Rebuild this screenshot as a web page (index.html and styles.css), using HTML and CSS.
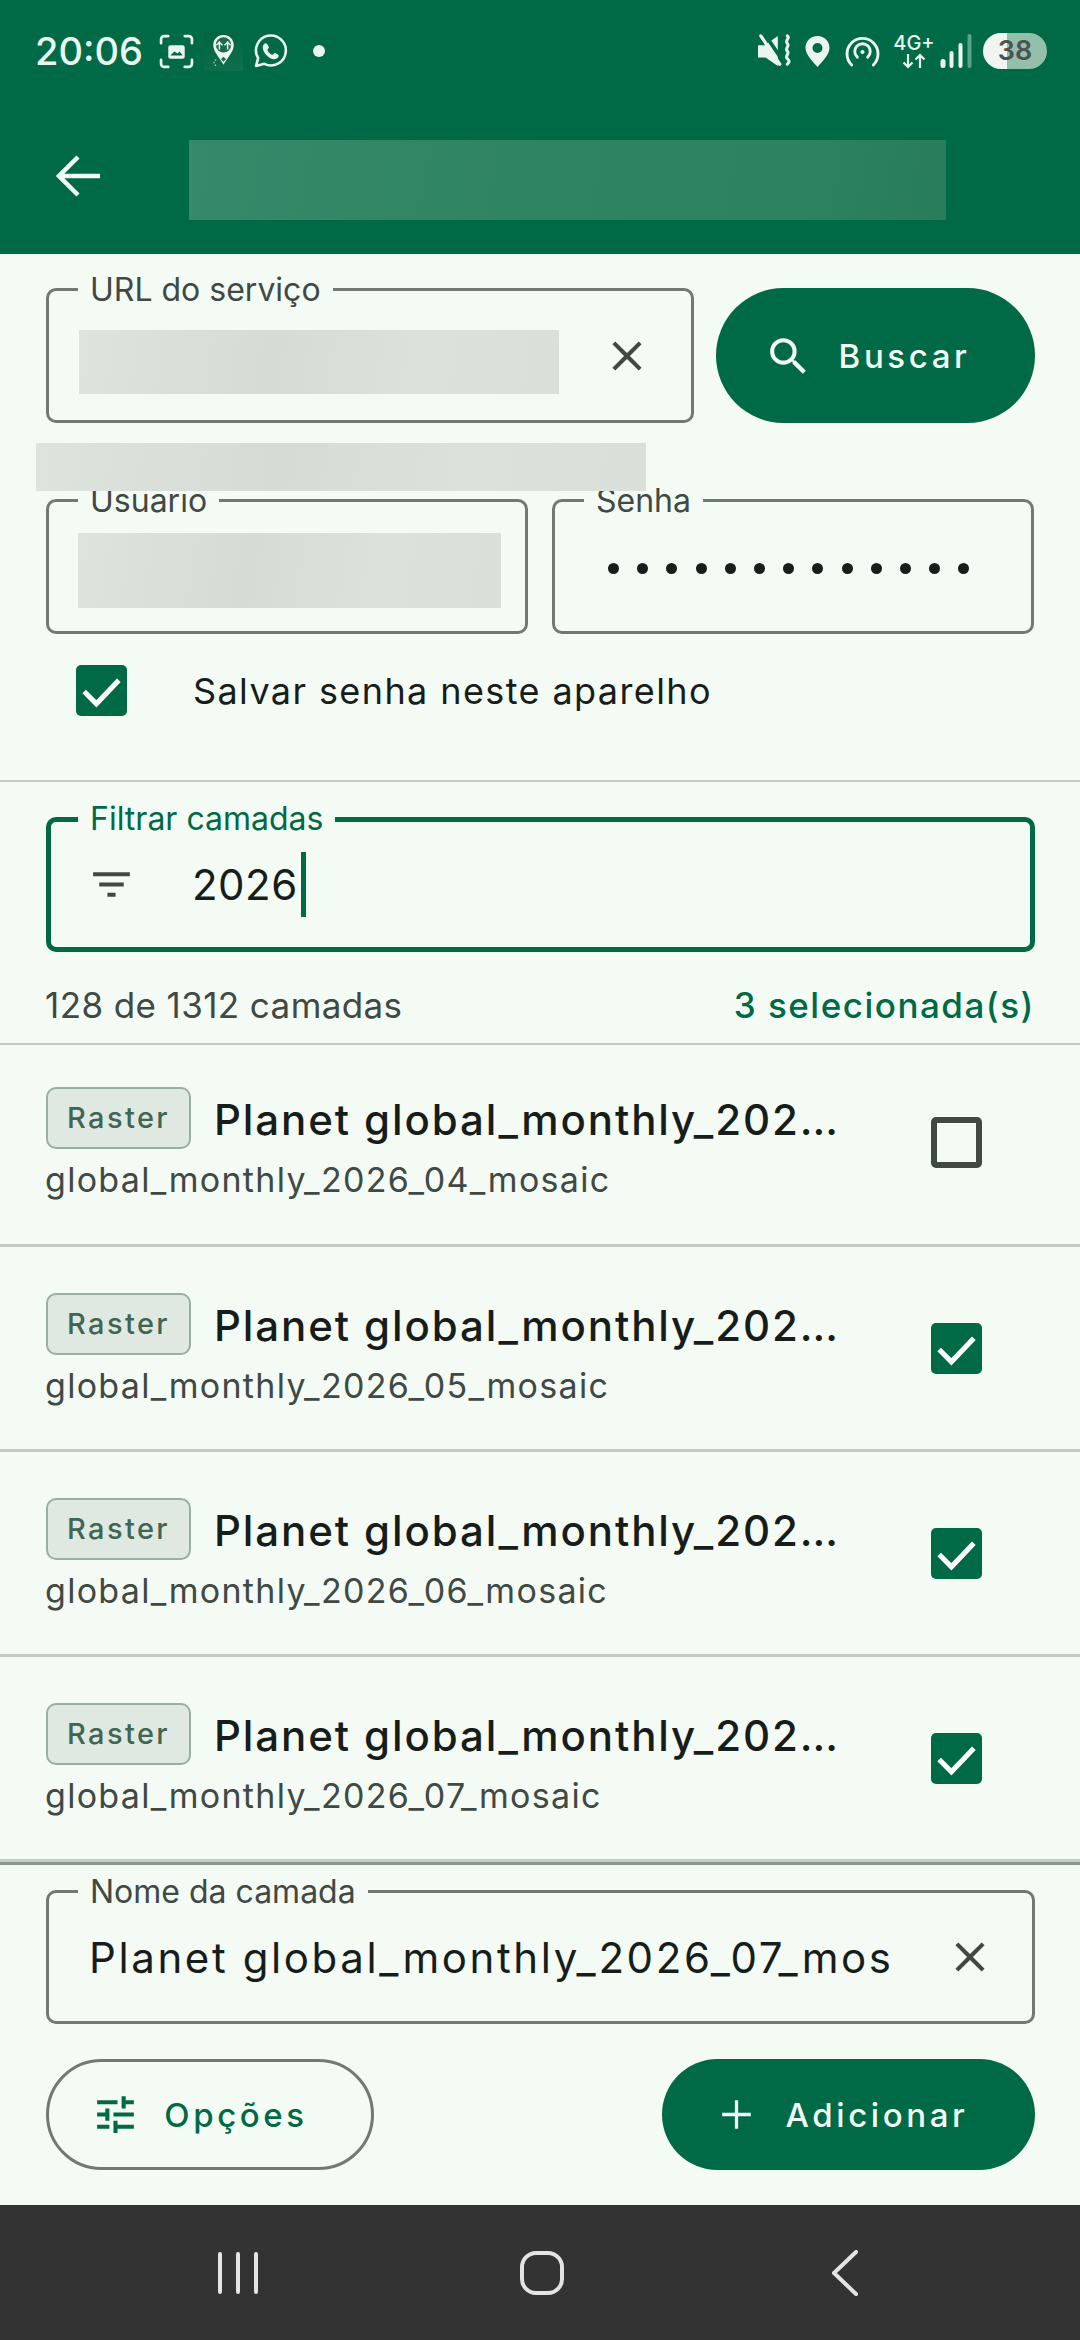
FILE: index.html
```html
<!DOCTYPE html>
<html lang="pt-BR">
<head>
    <meta charset="UTF-8">
    <meta name="viewport" content="width=device-width, initial-scale=1.0">
    <title>Adicionar camadas</title>
    <link rel="stylesheet" href="styles.css">
</head>
<body>

<svg class="defs" width="0" height="0">
    <symbol id="i-close" viewBox="0 0 24 24"><path d="M19 6.41L17.59 5 12 10.59 6.41 5 5 6.41 10.59 12 5 17.59 6.41 19 12 13.41 17.59 19 19 17.59 13.41 12z"/></symbol>
    <symbol id="i-check" viewBox="0 0 50 50"><path d="M8 26l12 12 22-23" fill="none" stroke="#fff" stroke-width="5"/></symbol>
</svg>

<div class="page">
    <header class="top">
        <div class="status">
            <div class="status-left">
                <span class="clock">20:06</span>
                <svg class="ic-shot" viewBox="0 0 34 34" fill="none" stroke="currentColor" stroke-width="2.6" stroke-linecap="round">
                    <path d="M2 9V5a3 3 0 0 1 3-3h4M25 2h4a3 3 0 0 1 3 3v4M32 25v4a3 3 0 0 1-3 3h-4M9 32H5a3 3 0 0 1-3-3v-4"/>
                    <rect x="9" y="11" width="16" height="13" rx="2" fill="currentColor" stroke="none"/>
                    <path d="M11 21l4-4 3 2 2-2 3 4z" fill="#00694a" stroke="none"/>
                </svg>
                <svg class="ic-app" viewBox="0 0 38 38">
                    <path d="M19 3c-6 0-10 4.500-10 10 0 6 6 12 10 19 4-7 10-13 10-19 0-5.500-4-10-10-10z" fill="#eef7f2"/>
                    <circle cx="19" cy="12.500" r="7.500" fill="#1d6a4e"/>
                    <path d="M15 9v8M23 9v8M12 13l3-3 3 3M20 13l3-3 3 3" stroke="#eef7f2" stroke-width="1.400" fill="none"/>
                    <path d="M19 24l2.500 2.500-2.500 2.500-2.500-2.500z" fill="#1d6a4e"/>
                    <path d="M12 27c-3 1-3 4 0 6" stroke="#cfe5da" stroke-width="1" stroke-dasharray="1.500 1.500" fill="none"/>
                </svg>
                <svg class="ic-wa" viewBox="0 0 34 34">
                    <path d="M3 31l2-7.500A14.500 14.500 0 1 1 11 29z" fill="none" stroke="currentColor" stroke-width="2.500" stroke-linejoin="round"/>
                    <path d="M12.500 9c-1.500 0-3 2-3 4 0 5 6 11.500 11.500 11.500 2 0 4-1.500 4-3.500 0-1-3.500-2.500-4-2.500s-1.200 1.700-2 1.700c-1.500 0-5-3.500-5-5 0-.8 1.500-1.500 1.500-2.200S13.500 9 12.500 9z" fill="currentColor"/>
                </svg>
                <span class="status-dot"></span>
            </div>
            <div class="status-right">
                <svg class="ic-mute" viewBox="0 0 36 36">
                    <path d="M0 12h7L21 2v32L8 25H0z" fill="currentColor"/>
                    <path d="M7 0l21 31" stroke="#006a46" stroke-width="4"/>
                    <path d="M3 2l20 30" stroke="currentColor" stroke-width="3.500" stroke-linecap="round"/>
                    <path d="M31 2c3.500 2-3 5 0 8s-3 5 0 8-3 5 0 8 2 4 0 6" fill="none" stroke="currentColor" stroke-width="3.200" stroke-linecap="round"/>
                </svg>
                <svg class="ic-pin" viewBox="0 0 24 31">
                    <path fill-rule="evenodd" d="M12 0C5 0 0 5 0 12c0 7 8 14 12 19 4-5 12-12 12-19C24 5 19 0 12 0zm0 7a5 5 0 1 1 0 10 5 5 0 0 1 0-10z" fill="currentColor"/>
                </svg>
                <svg class="ic-hotspot" viewBox="0 0 33 31" fill="none" stroke="currentColor" stroke-width="2.800" stroke-linecap="round">
                    <path d="M6 29A15 15 0 1 1 27 29"/>
                    <path d="M11.500 21.500a7.500 7.500 0 1 1 10 0"/>
                    <circle cx="16.500" cy="16.500" r="2" fill="currentColor" stroke="none"/>
                </svg>
                <div class="net">
                    <span class="net-label">4G+</span>
                    <svg class="ic-arrows" viewBox="0 0 24 16" fill="none" stroke="currentColor" stroke-width="2.200">
                        <path d="M6 1v13M1.500 9.500L6 14l4.500-4.500M18 15V2M13.500 6.500L18 2l4.500 4.500"/>
                    </svg>
                </div>
                <svg class="ic-signal" viewBox="0 0 31 34" fill="currentColor">
                    <rect x="0" y="25" width="5" height="9" rx="2.500"/>
                    <rect x="9" y="17" width="4" height="17" rx="2"/>
                    <rect x="18" y="9" width="4" height="25" rx="2"/>
                    <rect x="27" y="0" width="4" height="34" rx="2" opacity=".4"/>
                </svg>
                <div class="battery">38</div>
            </div>
        </div>
        <div class="appbar">
            <svg class="ic-back" viewBox="0 0 44 44" fill="none" stroke="#f2fbf6" stroke-width="4.500">
                <path d="M44 22H4M22 3L3 22l19 19"/>
            </svg>
            <div class="blur blur-title"></div>
        </div>
    </header>

    <section class="form">
        <div class="form-row">
            <div class="field field-url">
                <span class="field-label">URL do serviço</span>
                <div class="blur blur-url"></div>
                <svg class="ic-clear"><use href="#i-close"/></svg>
            </div>
            <button class="btn btn-filled btn-search">
                <svg class="btn-icon" viewBox="0 0 24 24"><path d="M15.500 14h-.79l-.28-.27A6.471 6.471 0 0 0 16 9.500 6.500 6.500 0 1 0 9.500 16c1.610 0 3.090-.59 4.230-1.570l.27.28v.79l5 4.990L20.490 19l-4.990-5zm-6 0C7.010 14 5 11.990 5 9.500S7.010 5 9.500 5 14 7.010 14 9.500 11.990 14 9.500 14z"/></svg>
                Buscar
            </button>
        </div>
        <div class="blur blur-hint"></div>
        <div class="form-row form-row-login">
            <div class="field field-half">
                <span class="field-label">Usuario</span>
                <div class="blur blur-user"></div>
            </div>
            <div class="field field-half">
                <span class="field-label">Senha</span>
                <div class="dots">
                    <i></i><i></i><i></i><i></i><i></i><i></i><i></i><i></i><i></i><i></i><i></i><i></i><i></i>
                </div>
            </div>
        </div>
        <div class="save-row">
            <span class="check check-on"><svg><use href="#i-check"/></svg></span>
            <span>Salvar senha neste aparelho</span>
        </div>
    </section>

    <section class="filter">
        <div class="field field-focus">
            <span class="field-label">Filtrar camadas</span>
            <svg class="ic-filter" viewBox="0 0 24 24"><path d="M10 18h4v-2h-4v2zM3 6v2h18V6H3zm3 7h12v-2H6v2z"/></svg>
            <span class="filter-value">2026</span><span class="caret"></span>
        </div>
        <div class="counts">
            <span>128 de 1312 camadas</span>
            <span class="counts-selected">3 selecionada(s)</span>
        </div>
    </section>

    <section class="list">
        <div class="item item-first">
            <div class="item-main">
                <div class="item-head">
                    <span class="chip">Raster</span>
                    <span class="item-title">Planet global_monthly_2026_04_mosaic</span>
                </div>
                <div class="item-sub">global_monthly_2026_04_mosaic</div>
            </div>
            <span class="check"></span>
        </div>
        <div class="item">
            <div class="item-main">
                <div class="item-head">
                    <span class="chip">Raster</span>
                    <span class="item-title">Planet global_monthly_2026_05_mosaic</span>
                </div>
                <div class="item-sub">global_monthly_2026_05_mosaic</div>
            </div>
            <span class="check check-on"><svg><use href="#i-check"/></svg></span>
        </div>
        <div class="item">
            <div class="item-main">
                <div class="item-head">
                    <span class="chip">Raster</span>
                    <span class="item-title">Planet global_monthly_2026_06_mosaic</span>
                </div>
                <div class="item-sub">global_monthly_2026_06_mosaic</div>
            </div>
            <span class="check check-on"><svg><use href="#i-check"/></svg></span>
        </div>
        <div class="item">
            <div class="item-main">
                <div class="item-head">
                    <span class="chip">Raster</span>
                    <span class="item-title">Planet global_monthly_2026_07_mosaic</span>
                </div>
                <div class="item-sub">global_monthly_2026_07_mosaic</div>
            </div>
            <span class="check check-on"><svg><use href="#i-check"/></svg></span>
        </div>
    </section>

    <section class="panel">
        <div class="field field-name">
            <span class="field-label">Nome da camada</span>
            <div class="name-value">Planet global_monthly_2026_07_mosaic</div>
            <svg class="ic-clear"><use href="#i-close"/></svg>
        </div>
        <div class="actions">
            <button class="btn btn-outline">
                <svg class="btn-icon" viewBox="0 0 24 24"><path d="M3 17v2h6v-2H3zM3 5v2h10V5H3zm10 16v-2h8v-2h-8v-2h-2v6h2zM7 9v2H3v2h4v2h2V9H7zm14 4v-2H11v2h10zm-6-4h2V7h4V5h-4V3h-2v6z"/></svg>
                Opções
            </button>
            <button class="btn btn-filled btn-add">
                <svg class="btn-icon" viewBox="0 0 24 24"><path d="M19 12.800h-6.200V19h-1.600v-6.200H5v-1.600h6.200V5h1.600v6.200H19z"/></svg>
                Adicionar
            </button>
        </div>
    </section>

    <nav class="navbar">
        <svg class="nav-recent" viewBox="0 0 42 42" fill="none" stroke="#e4e4e4" stroke-width="4" stroke-linecap="round">
            <path d="M3 2v38M21 2v38M39 2v38"/>
        </svg>
        <svg class="nav-home" viewBox="0 0 44 44" fill="none" stroke="#e4e4e4" stroke-width="4">
            <rect x="2" y="2" width="40" height="40" rx="14"/>
        </svg>
        <svg class="nav-back" viewBox="0 0 28 46" fill="none" stroke="#e4e4e4" stroke-width="4" stroke-linecap="round" stroke-linejoin="round">
            <path d="M25 2L3 23l22 21"/>
        </svg>
    </nav>
</div>

</body>
</html>
```

FILE: styles.css
```css
* {
    box-sizing: border-box;
}
body {
    margin: 0;
    background-color: #f4fbf4;
    font-family: Inter, "Noto Sans", sans-serif;
    color: #171d1a;
}
.defs {
    display: block;
    height: 0;
}
.page {
    width: 1080px;
    height: 2340px;
    display: flex;
    flex-direction: column;
    overflow: hidden;
}

/* top bars */
.top {
    height: 254px;
    background-color: #006a46;
    color: #eaf5ef;
    flex-shrink: 0;
}
.status {
    height: 102px;
    padding: 0 33px 0 35px;
    display: flex;
    align-items: center;
    justify-content: space-between;
}
.status-left,
.status-right {
    display: flex;
    align-items: center;
}
.clock {
    font-size: 38px;
    font-weight: 500;
    width: 124px;
}
.ic-shot {
    width: 35px;
    height: 35px;
    margin-right: 10px;
}
.ic-app {
    width: 39px;
    height: 39px;
    margin-right: 10px;
    background: linear-gradient(160deg, #00653f, #0f6f4e);
}
.ic-wa {
    width: 35px;
    height: 37px;
    margin-right: 25px;
}
.status-dot {
    width: 12px;
    height: 12px;
    border-radius: 50%;
    background-color: #eaf5ef;
}
.ic-mute {
    width: 34px;
    height: 34px;
    margin-right: 13px;
}
.ic-pin {
    width: 25px;
    height: 31px;
    margin-right: 15px;
}
.ic-hotspot {
    width: 35px;
    height: 32px;
    margin-right: 13px;
}
.net {
    width: 42px;
    margin-right: 5px;
    display: flex;
    flex-direction: column;
    align-items: center;
    color: #eaf5ef;
}
.net-label {
    font-size: 20px;
    font-weight: 500;
    line-height: 20px;
    white-space: nowrap;
}
.ic-arrows {
    width: 24px;
    height: 16px;
}
.ic-signal {
    width: 32px;
    height: 34px;
    margin-right: 11px;
}
.battery {
    width: 64px;
    height: 36px;
    border-radius: 18px;
    background: linear-gradient(90deg, #eff5f1 38%, #94bfaa 38%);
    color: #4a5352;
    font-size: 27px;
    font-weight: 600;
    line-height: 36px;
    text-align: center;
}
.appbar {
    height: 152px;
    padding-left: 56px;
    display: flex;
    align-items: center;
}
.ic-back {
    width: 44px;
    height: 44px;
    margin-right: 89px;
    margin-top: -4px;
}

/* redacted areas */
.blur {
    background: linear-gradient(100deg, #dde3dd, #d5dcd6 40%, #dbe1db 70%, #d9dfd9);
}
.blur-title {
    width: 757px;
    height: 80px;
    margin-top: 4px;
    background: linear-gradient(100deg, #36896a, #2f8463 45%, #2c8261 80%, #287c5c);
}
.blur-url {
    width: 480px;
    height: 64px;
    margin-top: 13px;
}
.blur-hint {
    width: 610px;
    height: 48px;
    margin: 20px 0 8px -10px;
    position: relative;
    z-index: 1;
}
.blur-user {
    width: 423px;
    height: 75px;
    margin-top: 8px;
}

/* form */
.form {
    height: 528px;
    padding: 34px 45px 0 46px;
    border-bottom: 2px solid #c3cbc5;
    flex-shrink: 0;
}
.form-row {
    display: flex;
    gap: 22px;
}
.form-row-login {
    gap: 24px;
}
.field {
    position: relative;
    border: 3px solid #727971;
    border-radius: 10px;
    display: flex;
    align-items: center;
}
.field-label {
    position: absolute;
    top: -20px;
    left: 29px;
    padding: 0 12px;
    background-color: #f4fbf4;
    color: #404943;
    font-size: 32px;
    line-height: 38px;
    white-space: nowrap;
}
.field-url {
    width: 648px;
    height: 135px;
    padding-left: 30px;
    justify-content: space-between;
}
.ic-clear {
    width: 50px;
    height: 50px;
    fill: #404943;
    flex-shrink: 0;
}
.field-url .ic-clear {
    margin-right: 39px;
}
.field-half {
    width: 482px;
    height: 135px;
}
.field-half .blur-user {
    margin-left: 29px;
}
.dots {
    margin: 4px 0 0 53px;
    display: flex;
    gap: 18.200px;
}
.dots i {
    width: 11px;
    height: 11px;
    border-radius: 50%;
    background-color: #171d1a;
}
.save-row {
    margin-top: 31px;
    padding-left: 30px;
    display: flex;
    align-items: center;
    gap: 66px;
    font-size: 36px;
    letter-spacing: 1.400px;
}
.check {
    width: 51px;
    height: 51px;
    border: 6px solid #404943;
    border-radius: 5px;
    flex-shrink: 0;
    display: block;
}
.check-on {
    border: none;
    background-color: #006a46;
}
.check svg {
    width: 51px;
    height: 51px;
    display: block;
}

/* buttons */
.btn {
    height: 111px;
    border: none;
    border-radius: 68px;
    display: flex;
    align-items: center;
    justify-content: center;
    font-family: inherit;
    font-size: 33px;
    font-weight: 500;
    letter-spacing: 3.600px;
}
.btn-icon {
    width: 49px;
    height: 49px;
    fill: currentColor;
    flex-shrink: 0;
}
.btn-filled {
    background-color: #006a46;
    color: #f2fbf6;
    padding-right: 23px;
}
.btn-search {
    width: 319px;
    height: 135px;
    gap: 26px;
    padding-top: 2px;
}
.btn-outline {
    width: 328px;
    background-color: transparent;
    border: 3px solid #727971;
    color: #006a46;
    gap: 24px;
    padding-right: 27px;
}
.btn-add {
    width: 373px;
    gap: 25px;
}

/* filter */
.filter {
    padding: 35px 45px 0 46px;
    border-bottom: 2px solid #c3cbc5;
    height: 263px;
    flex-shrink: 0;
}
.field-focus {
    height: 135px;
    border: 5px solid #006a46;
    padding-left: 36px;
}
.field-focus .field-label {
    top: -22px;
    left: 27px;
    color: #006a46;
}
.ic-filter {
    width: 49px;
    height: 49px;
    fill: #404943;
    margin-right: 56px;
}
.filter-value {
    font-size: 42px;
    letter-spacing: 0.500px;
}
.caret {
    width: 5px;
    height: 65px;
    margin-left: 3px;
    background-color: #006a46;
}
.counts {
    height: 91px;
    padding-top: 14px;
    display: flex;
    align-items: center;
    justify-content: space-between;
    font-size: 35px;
    letter-spacing: 0.400px;
    color: #404943;
    margin-left: -1px;
}
.counts-selected {
    color: #006a46;
    font-weight: 500;
    letter-spacing: 1.500px;
}

/* layer list */
.list {
    flex-shrink: 0;
}
.item {
    height: 205px;
    padding: 46px 98px 0 46px;
    border-bottom: 3px solid #c3cbc5;
    display: flex;
    justify-content: space-between;
}
.item-first {
    height: 202px;
    padding-top: 42px;
}
.item-main {
    width: 806px;
}
.item-head {
    display: flex;
    align-items: center;
    gap: 23px;
    height: 62px;
}
.chip {
    width: 145px;
    height: 62px;
    border: 2px solid #9aaea1;
    border-radius: 10px;
    background-color: #dfe9e1;
    color: #3f6652;
    font-size: 29px;
    font-weight: 500;
    letter-spacing: 2.400px;
    line-height: 58px;
    text-align: center;
    flex-shrink: 0;
}
.item-title {
    font-size: 42px;
    font-weight: 500;
    letter-spacing: 1.900px;
    white-space: nowrap;
    overflow: hidden;
    text-overflow: ellipsis;
    padding-top: 3px;
}
.item-sub {
    margin: 10px 0 0 -1px;
    font-size: 34px;
    letter-spacing: 1.300px;
    color: #404943;
    white-space: nowrap;
}
.item .check {
    margin-top: 30px;
}

/* bottom panel */
.panel {
    flex: 1;
    padding: 25px 45px 0 46px;
    border-top: 3px solid #8b968f;
}
.field-name {
    height: 134px;
    padding-left: 40px;
    justify-content: space-between;
}
.name-value {
    width: 800px;
    overflow: hidden;
    white-space: nowrap;
    font-size: 42px;
    letter-spacing: 2.600px;
}
.field-name .ic-clear {
    margin-right: 37px;
}
.actions {
    margin-top: 35px;
    display: flex;
    justify-content: space-between;
}

/* system nav */
.navbar {
    height: 135px;
    background-color: #323332;
    flex-shrink: 0;
    padding: 0 221px 0 217px;
    display: flex;
    align-items: center;
    justify-content: space-between;
}
.nav-recent {
    width: 42px;
    height: 42px;
}
.nav-home {
    width: 44px;
    height: 44px;
    margin-right: 6px;
}
.nav-back {
    width: 28px;
    height: 46px;
}
```
